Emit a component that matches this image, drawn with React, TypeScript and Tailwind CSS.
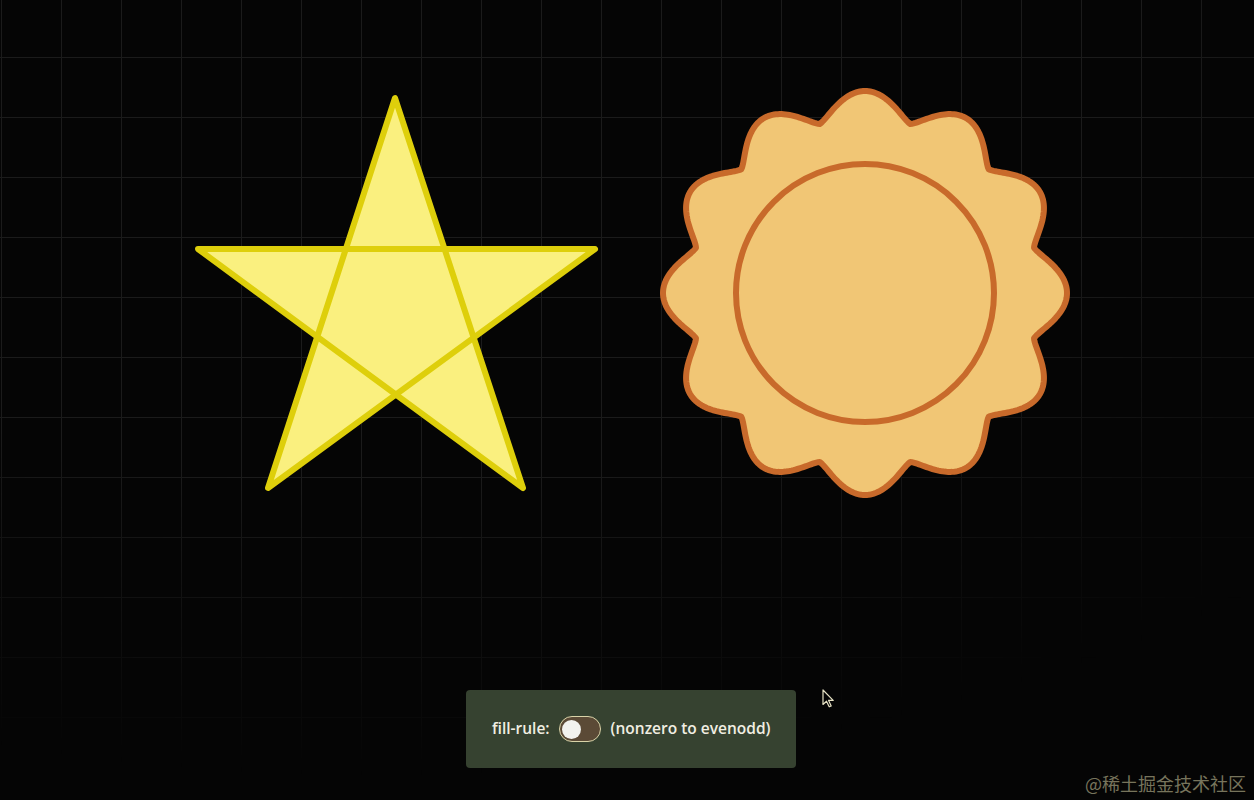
import React, { FC, useMemo } from 'react';

// scalloped sun outline: 12 lobes, rounder peaks than valleys
const sunPath = (cx: number, cy: number) => {
    const pts: string[] = [];
    const steps = 720;
    for (let i = 0; i <= steps; i++) {
        const t = (i / steps) * Math.PI * 2;
        const k = Math.pow((1 + Math.cos(12 * t)) / 2, 0.65);
        const r = 175 + 27 * k;
        const x = cx + r * Math.cos(t);
        const y = cy - r * Math.sin(t);
        pts.push(`${i === 0 ? 'M' : 'L'}${x.toFixed(2)} ${y.toFixed(2)}`);
    }
    return pts.join(' ') + ' Z';
};

const Shapes: FC = () => {
    const sun = useMemo(() => sunPath(865, 293), []);
    return (
        <svg className="block w-full h-[520px]" viewBox="0 0 1254 520">
            <path
                d="M395 98 L268 488 L595 249 L198 249 L523 488 Z"
                fill="#faf07f"
                stroke="#decf0b"
                strokeWidth={6}
                strokeLinejoin="round"
                fillRule="nonzero"
            />
            <path d={sun} fill="#f1c675" stroke="#c86a2b" strokeWidth={6} strokeLinejoin="round" />
            <circle cx={865} cy={293} r={129} fill="#f1c675" stroke="#c86a2b" strokeWidth={6} />
        </svg>
    );
};

const Toggle: FC = () => (
    <div className="w-[42px] h-[26px] rounded-full border-[1.5px] border-[#d9d3a8] bg-[#5b4a36] flex items-center px-[2px]">
        <div className="w-[19px] h-[19px] rounded-full bg-[#f2f2ee]" />
    </div>
);

const App: FC = () => {
    return (
        <div className="relative w-full h-[800px] overflow-hidden bg-[#050505] font-['Open_Sans',sans-serif]">
            <div className="absolute inset-0 bg-[linear-gradient(to_right,#1b1b1b_1px,transparent_1px),linear-gradient(to_bottom,#1b1b1b_1px,transparent_1px)] bg-[size:60px_60px] bg-[position:1px_57px] [mask-image:radial-gradient(ellipse_115%_100%_at_30%_5%,black_55%,transparent_92%)]" />

            <div className="relative">
                <Shapes />

                <div className="mt-[170px] ml-[466px] w-[330px] h-[78px] rounded-[4px] bg-[#364230] flex items-center pl-[26px] text-[15.5px] font-semibold text-[#f1eee2]">
                    <span>fill-rule:</span>
                    <div className="ml-[9px]">
                        <Toggle />
                    </div>
                    <span className="ml-[10px]">(nonzero to evenodd)</span>
                </div>
            </div>

            <svg className="absolute left-[822px] top-[689px] w-[13px] h-[19px]" viewBox="0 0 13 19">
                <path
                    d="M1 1 L1 15.5 L4.5 12.2 L7.2 17.8 L9.2 16.9 L6.6 11.4 L11.2 11.4 Z"
                    fill="#050505"
                    stroke="#e6e1c4"
                    strokeWidth={1.2}
                    strokeLinejoin="round"
                />
            </svg>

            <div className="absolute right-[8px] bottom-[8px] text-[18px] leading-none text-[#77745c] font-['Noto_Sans_CJK_SC',sans-serif]">
                @稀土掘金技术社区
            </div>
        </div>
    );
};

export default App;
